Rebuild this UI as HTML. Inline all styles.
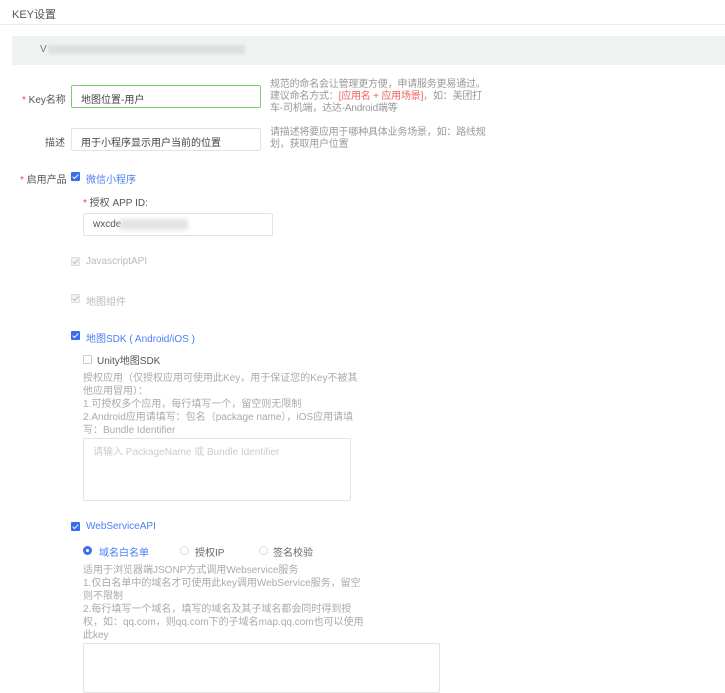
<!DOCTYPE html>
<html><head><meta charset="utf-8"><style>
body{margin:0;width:725px;height:675px;overflow:hidden;background:#fff;font-family:"Liberation Sans","Noto Sans CJK SC",sans-serif;font-size:10px;color:#666;position:relative}
.a{position:absolute;white-space:nowrap}
.inp{position:absolute;border:1px solid #e3e3e3;border-radius:2px;box-sizing:border-box;background:#fff}
.cb{position:absolute;width:9px;height:9px;border-radius:1px;box-sizing:border-box}
.on{background:#3a6cf0}
.on:after,.dis:after{content:"";position:absolute;left:2.5px;top:0.5px;width:2px;height:5px;border:solid #fff;border-width:0 1.4px 1.4px 0;transform:rotate(45deg)}
.dis{background:#f2f2f2;border:1px solid #ddd}
.dis:after{border-color:#bbb;left:2px;top:0}
.off{border:1px solid #ccc}
.help{position:absolute;color:#999;line-height:12px;font-size:10px;letter-spacing:-0.2px}
.p{position:absolute;color:#aaa;line-height:13px;font-size:10px}
.blue{color:#4a7ef5}
.r{position:absolute;width:9px;height:9px;border-radius:50%;box-sizing:border-box;border:1px solid #ddd}
</style></head><body>
<div class="a" style="left:12px;top:6px;font-size:11px;color:#555">KEY设置</div>
<div style="position:absolute;left:0;top:24px;width:725px;height:1px;background:#eee"></div>
<div style="position:absolute;left:12px;top:36px;width:713px;height:29px;background:#eef3f2"></div>
<div class="a" style="left:40px;top:44px;color:#777">V</div>
<div style="position:absolute;left:48px;top:45px;width:197px;height:9px;background:#dde1e1;filter:blur(1px)"></div>

<div class="a" style="left:22px;top:91px;color:#555"><span style="color:#e44">*</span> Key名称</div>
<div class="inp" style="left:71px;top:85px;width:190px;height:23px;border-color:#7ecb6a"></div>
<div class="a" style="left:81px;top:91px;color:#444">地图位置-用户</div>
<div class="help" style="left:270px;top:79px">规范的命名会让管理更方便，申请服务更易通过。<br>建议命名方式：<span style="color:#f06060">[应用名 + 应用场景]</span>，如：美团打<br>车-司机端，达达-Android端等</div>

<div class="a" style="left:45px;top:134px;color:#555">描述</div>
<div class="inp" style="left:71px;top:128px;width:190px;height:23px"></div>
<div class="a" style="left:81px;top:134px;color:#444">用于小程序显示用户当前的位置</div>
<div class="help" style="left:270px;top:127px">请描述将要应用于哪种具体业务场景，如：路线规<br>划，获取用户位置</div>

<div class="a" style="left:20px;top:171px;color:#555"><span style="color:#e44">*</span> 启用产品</div>
<div class="cb on" style="left:71px;top:172px"></div>
<div class="a blue" style="left:86px;top:171px">微信小程序</div>
<div class="a" style="left:83px;top:194px;color:#555"><span style="color:#e44">*</span> 授权 APP ID:</div>
<div class="inp" style="left:83px;top:213px;width:190px;height:23px"></div>
<div class="a" style="left:93px;top:219px;color:#555">wxcde</div>
<div style="position:absolute;left:120px;top:219px;width:68px;height:11px;background:#e3e3e3;filter:blur(2px)"></div>

<div class="cb dis" style="left:71px;top:257px"></div>
<div class="a" style="left:86px;top:256px;color:#bbb">JavascriptAPI</div>
<div class="cb dis" style="left:71px;top:294px"></div>
<div class="a" style="left:86px;top:293px;color:#bbb">地图组件</div>
<div class="cb on" style="left:71px;top:331px"></div>
<div class="a blue" style="left:86px;top:330px">地图SDK ( Android/iOS )</div>
<div class="cb off" style="left:83px;top:355px"></div>
<div class="a" style="left:97px;top:352px;color:#555">Unity地图SDK</div>
<div class="p" style="left:83px;top:372px">授权应用（仅授权应用可使用此Key，用于保证您的Key不被其<br>他应用冒用）：<br>1.可授权多个应用，每行填写一个，留空则无限制<br>2.Android应用请填写：包名（package name），iOS应用请填<br>写：Bundle Identifier</div>
<div class="inp" style="left:83px;top:438px;width:268px;height:63px"></div>
<div class="a" style="left:93px;top:443px;color:#ccc">请输入 PackageName 或 Bundle Identifier</div>

<div class="cb on" style="left:71px;top:522px"></div>
<div class="a blue" style="left:86px;top:521px">WebServiceAPI</div>
<div class="r" style="left:83px;top:546px;border:3px solid #3a6cf0"></div>
<div class="a blue" style="left:99px;top:544px">域名白名单</div>
<div class="r" style="left:180px;top:546px"></div>
<div class="a" style="left:195px;top:544px;color:#666">授权IP</div>
<div class="r" style="left:259px;top:546px"></div>
<div class="a" style="left:273px;top:544px;color:#666">签名校验</div>
<div class="p" style="left:83px;top:564px">适用于浏览器端JSONP方式调用Webservice服务<br>1.仅白名单中的域名才可使用此key调用WebService服务，留空<br>则不限制<br>2.每行填写一个域名，填写的域名及其子域名都会同时得到授<br>权，如：qq.com，则qq.com下的子域名map.qq.com也可以使用<br>此key</div>
<div class="inp" style="left:83px;top:643px;width:357px;height:50px"></div>
</body></html>
